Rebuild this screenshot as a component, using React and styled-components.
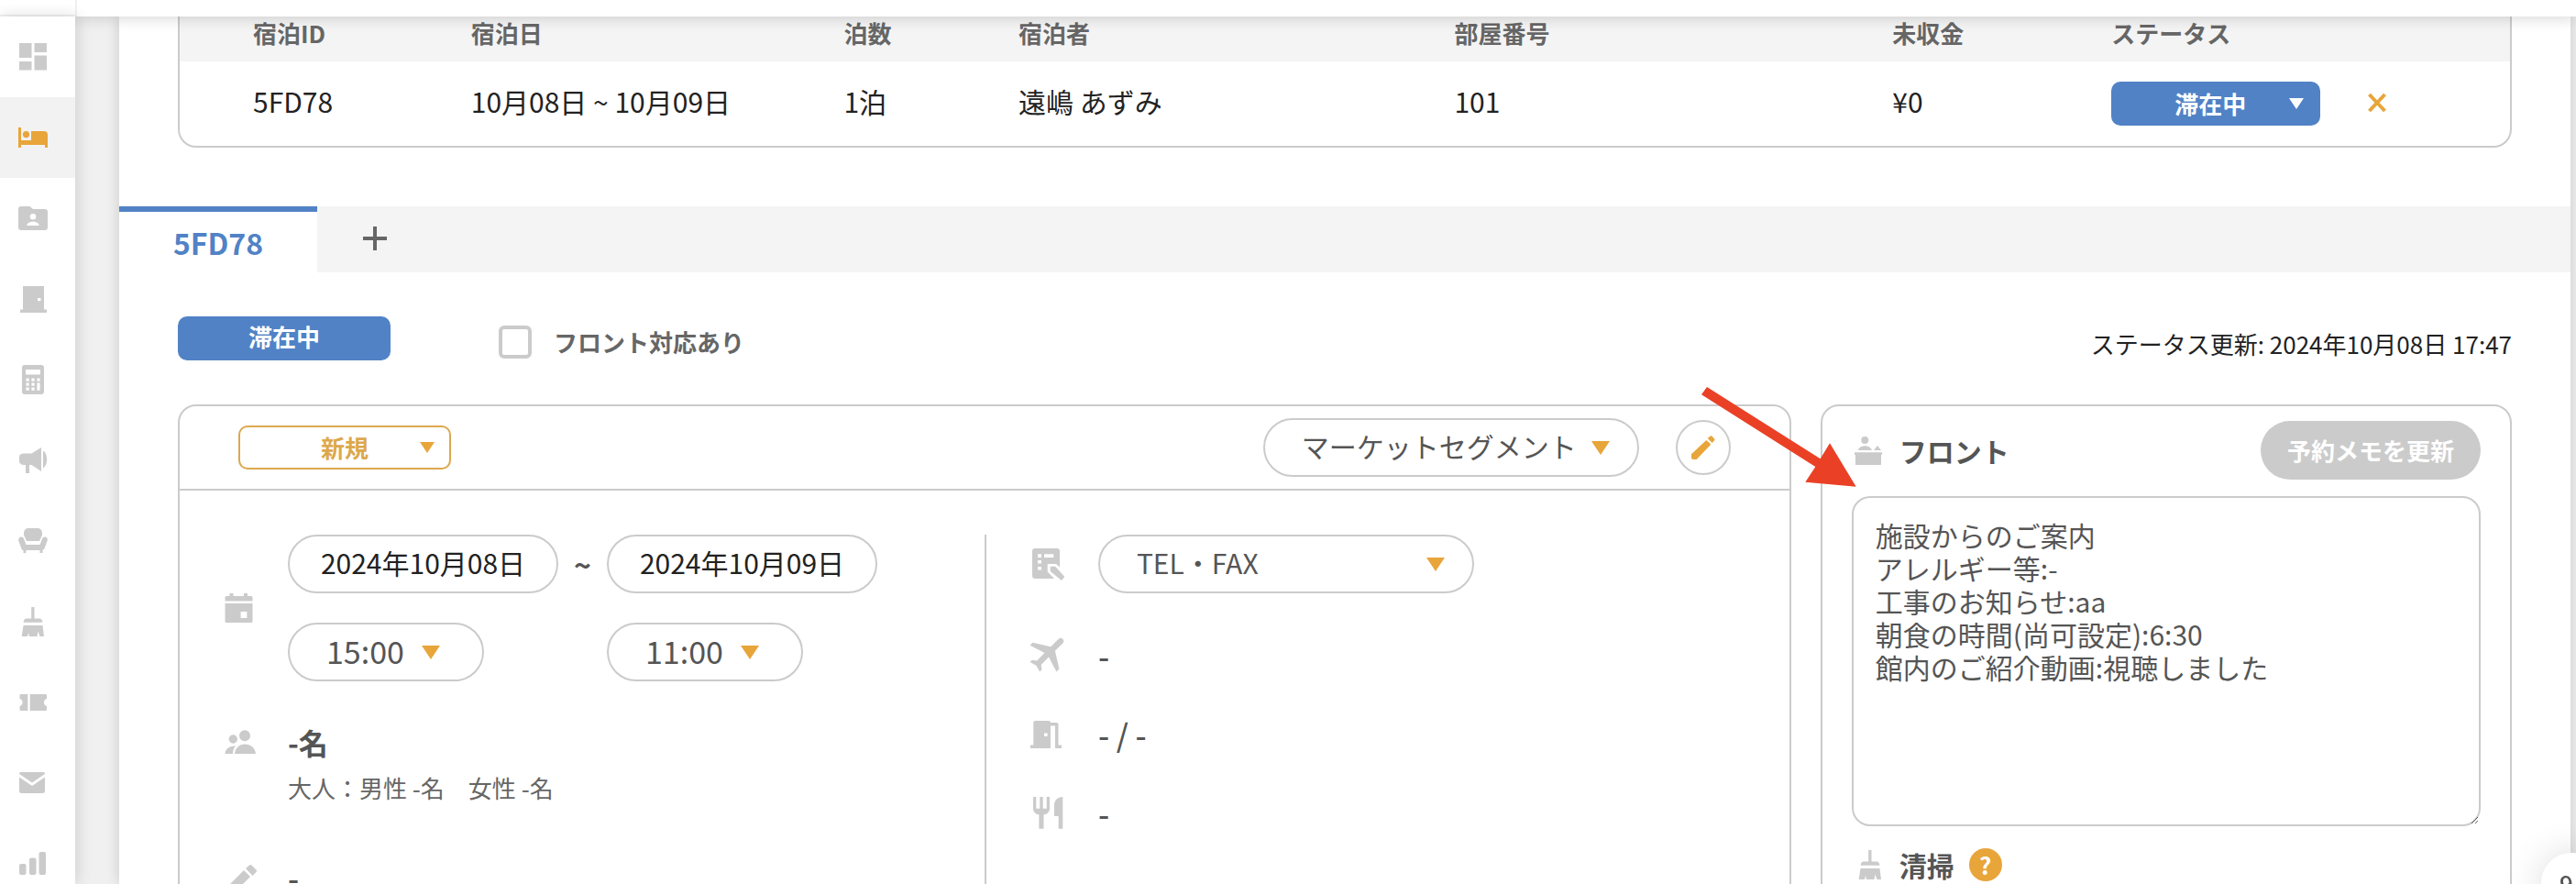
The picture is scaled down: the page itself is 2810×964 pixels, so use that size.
import React, {Component} from 'react';
import styled, {createGlobalStyle, css} from 'styled-components';


const GlobalStyle = createGlobalStyle`
    * {
        box-sizing: border-box;
    }

    html, body {
        margin: 0;
        height: 100%;
        overflow: hidden;
    }

    body, button, input, select, textarea {
        font-family: "Noto Sans CJK JP", "Noto Sans", sans-serif;
    }

    body {
        background: #f0f0f0;
        color: #222;
        font-size: 30px;
        line-height: 44px;
    }
`;

const orange = '#e8a53a';
const blue = '#5182c6';
const line = '#cbcbcb';


const Shell = styled.div`
    display: flex;
    flex-direction: column;
    height: 100vh;
    overflow: hidden;
`;

const TopBar = styled.header`
    position: relative;
    z-index: 2;
    flex: none;
    height: 18px;
    background: #fff;
    box-shadow: 0 2px 16px rgba(0, 0, 0, 0.16);
`;

const Brand = styled.div`
    width: 84px;
    height: 18px;
    border-right: 2px solid #f0f0f0;
    border-bottom: 2px solid #f0f0f0;
`;

const Columns = styled.div`
    display: flex;
    flex: 1;
    min-height: 0;
`;

const SideNav = styled.nav`
    position: relative;
    z-index: 3;
    flex: none;
    width: 82px;
    background: #fff;
    box-shadow: 2px 0 16px rgba(0, 0, 0, 0.14);
`;

const NavLink = styled.a`
    display: flex;
    align-items: center;
    height: 88px;
    padding-left: 16px;
    color: ${({$active}) => ($active ? orange : line)};
    background: ${({$active}) => ($active ? '#f2f2f2' : 'transparent')};
`;

const Icon = styled.svg`
    flex: none;
    width: 40px;
    height: 40px;
    fill: currentColor;
    color: ${({$color}) => $color || 'inherit'};
`;

const Page = styled.main`
    flex: 1;
    min-width: 0;
    margin: 0 6px 0 48px;
    background: #fff;
    box-shadow: 0 0 14px rgba(0, 0, 0, 0.16);
`;

const StayList = styled.section`
    margin: 0 64px 64px;
    border: 2px solid ${line};
    border-top: 0;
    border-radius: 0 0 20px 20px;
    overflow: hidden;
`;

const StayTable = styled.table`
    width: 100%;
    table-layout: fixed;
    border-collapse: collapse;
    text-align: left;

    th, td {
        padding: 0;
        white-space: nowrap;
    }

    th:first-child, td:first-child {
        padding-left: 80px;
    }

    th {
        height: 49px;
        padding-bottom: 14px;
        background: #f4f4f4;
        color: #666;
        font-size: 26px;
        line-height: 34px;
    }

    td {
        height: 92px;
    }

    td:not(:last-child) {
        padding-bottom: 6px;
    }
`;

const Inline = styled.div`
    display: flex;
    align-items: center;
    gap: 42px;
`;

const IconButton = styled.button`
    display: flex;
    align-items: center;
    justify-content: center;
    padding: 0;
    border: 0;
    background: none;
    color: ${orange};
    cursor: pointer;
`;

const RoundButton = styled(IconButton)`
    width: 60px;
    height: 60px;
    border: 2px solid ${line};
    border-radius: 50%;
`;

const badge = css`
    height: 48px;
    border-radius: 10px;
    font-size: 26px;
    font-weight: 700;
    line-height: 44px;
    text-align: center;
    text-align-last: center;
`;

const StatusBadge = styled.div`
    ${badge}
    width: 232px;
    background: ${blue};
    color: #fff;
`;

const SelectBox = styled.div`
    display: inline-grid;
    align-items: center;
    width: ${({$width}) => $width}px;

    > * {
        grid-area: 1 / 1;
    }
`;

const Caret = styled.svg`
    justify-self: end;
    width: ${({$small}) => ($small ? 16 : 20)}px;
    height: ${({$small}) => ($small ? 12 : 15)}px;
    margin-right: ${({$right}) => $right}px;
    fill: ${({$color}) => $color || orange};
    pointer-events: none;
`;

const BadgeSelect = styled.select`
    ${badge}
    appearance: none;
    width: 100%;
    padding: 0 ${({$filled}) => ($filled ? 12 : 0)}px 0 0;
    border: 2px solid ${({$filled}) => ($filled ? blue : '#dca84e')};
    background: ${({$filled}) => ($filled ? blue : '#fff')};
    color: ${({$filled}) => ($filled ? '#fff' : '#dca84e')};
`;

const PillSelect = styled.select`
    appearance: none;
    width: 100%;
    height: 64px;
    padding: 0 40px 4px;
    border: 2px solid ${line};
    border-radius: 32px;
    background: #fff;
    color: #555;
    font-size: ${({$large}) => ($large ? 34 : 30)}px;
`;

const DateInput = styled.input`
    width: 295px;
    height: 64px;
    padding: 0 0 4px;
    border: 2px solid ${line};
    border-radius: 32px;
    background: #fff;
    color: #222;
    font-size: 30px;
    text-align: center;
`;

const TabBar = styled.div`
    display: flex;
    height: 72px;
    background: #f4f4f4;
`;

const Tab = styled.button`
    width: 216px;
    padding: 0;
    border: 0;
    border-top: 6px solid ${blue};
    background: #fff;
    color: ${blue};
    font-size: 32px;
    font-weight: 700;
`;

const AddTab = styled(IconButton)`
    width: 126px;
    padding-bottom: 2px;
    color: #666;
`;

const StatusRow = styled.div`
    display: flex;
    align-items: center;
    height: 48px;
    margin: 48px 64px;
    font-size: 26px;
`;

const CheckLabel = styled.label`
    display: flex;
    align-items: center;
    gap: 24px;
    margin: 8px auto 0 118px;
    color: #666;
    font-weight: 700;
`;

const Checkbox = styled.input`
    appearance: none;
    width: 36px;
    height: 36px;
    margin: 0;
    border: 4px solid ${line};
    border-radius: 6px;
    background: #fff;
`;

const Updated = styled.div`
    padding-top: 12px;
`;

const Cards = styled.div`
    display: grid;
    grid-template-columns: 7fr 3fr;
    gap: 32px;
    margin: 0 64px;
`;

const Card = styled.section`
    position: relative;
    min-width: 0;
    border: 2px solid ${line};
    border-radius: 20px;
`;

const CardHead = styled.div`
    display: flex;
    align-items: center;
    justify-content: space-between;
    height: 92px;
    padding: 0 64px;
    border-bottom: 2px solid ${line};
`;

const HeadActions = styled.div`
    display: flex;
    align-items: center;
    gap: 40px;
`;

const CardBody = styled.div`
    display: grid;
    grid-template-columns: 1fr 1fr;
    padding: 48px 0;
`;

const Details = styled.div`
    display: flex;
    flex-direction: column;
    gap: ${({$divided}) => ($divided ? 42 : 46)}px;
    padding-left: ${({$divided}) => ($divided ? 48 : 44)}px;
    border-left: ${({$divided}) => ($divided ? `2px solid ${line}` : '0')};
    color: #555;
`;

const Detail = styled.div`
    display: flex;
    align-items: ${({$top}) => ($top ? 'flex-start' : 'center')};
    gap: 34px;
    min-height: 44px;
    padding-bottom: ${({$spaced}) => ($spaced ? 4 : 0)}px;
`;

const StayPeriod = styled.div`
    display: grid;
    grid-template-columns: 295px 53px 295px;
    row-gap: 32px;
    align-items: center;
    font-size: 32px;
    font-weight: 700;
    text-align: center;

    > div {
        justify-self: start;
    }
`;

const Guests = styled.div`
    display: flex;
    flex-direction: column;
    gap: 12px;
    padding-bottom: 12px;

    strong {
        font-size: 32px;
        line-height: 40px;
    }

    span {
        color: #666;
        font-size: 26px;
        line-height: 36px;
    }
`;

const Value = styled.span`
    font-size: 34px;
    font-weight: 500;
    line-height: 40px;
`;

const MemoCard = styled(Card)`
    display: flex;
    flex-direction: column;
    padding: 16px 32px 32px;
`;

const MemoTitle = styled.h2`
    display: flex;
    align-items: center;
    gap: 12px;
    margin: 0;
    color: #555;
    font-size: 30px;
    line-height: 40px;
`;

const MemoHead = styled.div`
    display: flex;
    align-items: center;
    justify-content: space-between;
`;

const UpdateButton = styled.button`
    width: 240px;
    height: 64px;
    padding: 0 0 2px;
    border: 0;
    border-radius: 32px;
    background: ${line};
    color: #fff;
    font-size: 26px;
    font-weight: 700;
`;

const Memo = styled.textarea`
    width: 100%;
    height: 360px;
    margin: 18px 0 22px;
    padding: 22px 24px;
    border: 2px solid ${line};
    border-radius: 20px;
    background: #fff;
    color: #555;
    font-size: 30px;
    line-height: 36px;
    resize: both;
`;

const Help = styled.button`
    width: 36px;
    height: 36px;
    margin-left: 4px;
    padding: 0;
    border: 0;
    border-radius: 50%;
    background: ${orange};
    color: #fff;
    font-size: 26px;
    font-weight: 700;
    line-height: 36px;
`;

const Arrow = styled.svg`
    position: absolute;
    top: -21px;
    left: -132px;
    width: 169px;
    height: 109px;
    fill: #ea4126;
    pointer-events: none;
`;

const FloatingButton = styled.button`
    position: fixed;
    right: -30px;
    bottom: -32px;
    z-index: 4;
    width: 68px;
    height: 66px;
    padding: 0 0 0 20px;
    border: 0;
    border-radius: 33px;
    background: #fff;
    box-shadow: 0 0 40px rgba(0, 0, 0, 0.14);
    color: #555;
    font-size: 26px;
    font-weight: 500;
    line-height: 60px;
    text-align: left;
`;


// every drawing sits on a 40 x 40 grid
const shapes = {
    dashboard: <path d="M5 5h13.5v16H5zM21.500 5H35v10H21.500zM21.500 18.500H35v16H21.500zM5 25h13.500v9.500H5z" />,
    bed: <path d="M4 9h3v14h11V13h14a4 4 0 0 1 4 4v14h-3v-3H7v3H4zM12.500 13a3.600 3.600 0 1 1 0 7.200a3.600 3.600 0 1 1 0-7.200z" />,
    folder: <path fillRule="evenodd" d="M7 7h9.500l3.500 3h13a3 3 0 0 1 3 3v17a3 3 0 0 1-3 3H7a3 3 0 0 1-3-3V10a3 3 0 0 1 3-3zM20 15a3.300 3.300 0 1 0 0 6.600a3.300 3.300 0 1 0 0-6.600zM13.200 28h13.600c-.5-3-3.500-4.300-6.800-4.300s-6.300 1.300-6.800 4.300z" />,
    door: <path fillRule="evenodd" d="M9 6h23v25.500h3V35H6v-3.500h3zM25 19v3.300h3.500V19z" />,
    calculator: <path fillRule="evenodd" d="M11 4h18a3 3 0 0 1 3 3v26a3 3 0 0 1-3 3H11a3 3 0 0 1-3-3V7a3 3 0 0 1 3-3zM12 9v5.500h16V9zM12.500 18.500v3.200h3.200v-3.200zM18.400 18.500v3.200h3.200v-3.200zM24.400 18.500v3.200h3.200v-3.200zM12.500 23.500v3.200h3.200v-3.200zM18.400 23.500v3.200h3.200v-3.200zM12.500 28.500v3.200h3.200v-3.200zM18.400 28.500v3.200h3.200v-3.200zM24.400 23.500v8.200h3.200v-8.200z" />,
    megaphone: <path d="M10 12.500h8.500L29 6v26l-10.500-7H16v9h-4v-9h-2c-3 0-5-2-5-4v-5c0-2 2-3.500 5-3.500zM31 9.500c5.500 3 5.500 16 0 19z" />,
    chair: <path d="M15 6h10a5 5 0 0 1 5 5v2.500l-3 6.500H13l-3-6.500V11a5 5 0 0 1 5-5zM5.500 16c2-1 4 0 4.500 1.500l2.500 6.500h15l2.500-6.500c.5-1.500 2.500-2.500 4.500-1.500c1.500 1 1.500 2.500 1 4l-3 8c-.4 1-1 1.500-2 1.500V33h-3v-3h-15v3h-3v-3c-1 0-1.600-.5-2-1.500l-3-8c-.5-1.500-.5-3.500 1-4.500z" />,
    broom: <path d="M18.200 4h3.300v12.500h5.500c2 0 3 1.500 3.500 4.300h-21c.5-2.800 1.500-4.300 3.500-4.300h5.200zM9.500 24h21L32 36h-4.500l-2-5.500L24.500 36h-8.700l-.6-4l-1.400 4H7.700z" />,
    ticket: <path d="M7 11h7.300v18H7c-1 0-1.500-.5-1.500-1.500V24c2-.5 3-2 3-4s-1-3.500-3-4v-3.500C5.500 11.500 6 11 7 11zM16.700 11H33.500c1 0 1.500.5 1.500 1.500V16c-2 .5-3 2-3 4s1 3.500 3 4v3.500c0 1-.5 1.500-1.500 1.500H16.700z" />,
    mail: <path d="M7 8h24c1.500 0 2 .7 2 2L19 19.500L5 10c0-1.300.5-2 2-2zM5 13.500L19 23l14-9.500V28.500a2.500 2.500 0 0 1-2.500 2.500h-23A2.500 2.500 0 0 1 5 28.500z" />,
    chart: <path d="M7 20h3.500a2 2 0 0 1 2 2v8a2 2 0 0 1-2 2H7a2 2 0 0 1-2-2v-8a2 2 0 0 1 2-2zM18 13.500h3.500a2 2 0 0 1 2 2V30a2 2 0 0 1-2 2H18a2 2 0 0 1-2-2V15.500a2 2 0 0 1 2-2zM28.500 7H32a2 2 0 0 1 2 2v21a2 2 0 0 1-2 2h-3.500a2 2 0 0 1-2-2V9a2 2 0 0 1 2-2z" />,
    calendar: <path fillRule="evenodd" d="M10.500 4h4v3h11.500V4h4v3H34a1.500 1.500 0 0 1 1.500 1.500v4h-30v-4A1.500 1.500 0 0 1 7 7h3.500zM5.500 15h30v19.500A1.500 1.500 0 0 1 34 36H7a1.500 1.500 0 0 1-1.500-1.500zM22.600 24v7h6.800v-7z" />,
    people: <path d="M14.300 12.300a4.700 4.700 0 1 1 0 9.400a4.700 4.700 0 1 1 0-9.400zM27 7.300a6 6 0 1 1 0 12a6 6 0 1 1 0-12zM16 33c.5-6 5-10.500 11.200-10.500S38.500 27 39 33zM5.500 33c.3-5 4.500-8.500 11.500-8.500c-2 2-3 5-3 8.500z" />,
    pencil: <path d="M7 27.300L23.300 12l4.400 3.700l.3 1.300L12.700 33H9a2 2 0 0 1-2-2zM24.700 10l3-2.600a1.500 1.500 0 0 1 1.700.1l2.700 3a1.500 1.500 0 0 1 .1 1.700L29.700 15z" />,
    bigPencil: <path d="M5 33L26 12l7 7L12 40H7a2 2 0 0 1-2-2zM28 10l4-3.600a2 2 0 0 1 2.500 0l5 5a2 2 0 0 1 0 2.500L35.500 18z" />,
    form: <path fillRule="evenodd" d="M5 3h24a3 3 0 0 1 3 3v17.500l-4-3.500h-9.300v8.500l7.300 7.500H5a3 3 0 0 1-3-3V6a3 3 0 0 1 3-3zM8 9.300V13h4V9.300zM8 16v3.400h4V16zM8 23v3.400h4V23zM15 9.300V13h10.300V9.300zM21.700 22.700h5.500L37.300 34L34 38L21.700 28z" />,
    plane: <g transform="translate(-5 -8) scale(2.15) rotate(45 12 12)"><path d="M21 16v-2l-8-5V3.500a1.500 1.500 0 0 0-3 0V9l-8 5v2l8-2.500V19l-2 1.500V22l3.500-1 3.500 1v-1.500L13 19v-5.500z" /></g>,
    openDoor: <path fillRule="evenodd" d="M5 5h15a2 2 0 0 1 2 2h6.500a2 2 0 0 1 2 2v22.500H34V35h-7V10.500h-5V35H0v-3.500h3.300V7A2 2 0 0 1 5 5zM15 18.500V22h3.600v-3.500z" />,
    cutlery: <path d="M3 2h3.300v12.700h4V2h3.400v12.700h4V2H21v12.500c0 4-2.500 6.500-6.500 6.800v15.400H9.400V21.300C5.500 21 3 18.500 3 14.500zM35.300 2v34.700h-4.600V23H26V11c0-5.500 4-9 9.300-9z" />,
    reception: <path d="M14.300 5a4 4 0 1 1 0 8a4 4 0 1 1 0-8zM6.700 20c1-3 4-4.700 7.700-4.700s6.600 1.700 7.600 4.700zM24 20l4-5l4 5zM3 22.300h30V25h-1v11H4V25H3z" />,
    plus: <path d="M18 7h4v11h11v4H22v11h-4V22H7v-4h11z" />,
    cross: <path d="M11.500 10L28.500 28M28.500 10L11.500 28" stroke="currentColor" strokeWidth="4" />,
};

function Glyph({name, color}) {
    return (
        <Icon viewBox="0 0 40 40" $color={color} aria-hidden="true">{shapes[name]}</Icon>
    );
}

function Select({label, options, width, pill, large, filled, right}) {
    const Field = pill ? PillSelect : BadgeSelect;
    return (
        <SelectBox $width={width}>
            <Field aria-label={label} $large={large} $filled={filled}>
                {options.map(option => <option key={option}>{option}</option>)}
            </Field>
            <Caret viewBox="0 0 20 15" preserveAspectRatio="none" $small={!pill} $right={right} $color={filled && '#fff'}>
                <path d="M0 0h20L10 15z" />
            </Caret>
        </SelectBox>
    );
}


const navigation = [
    ['dashboard', 'ダッシュボード'],
    ['bed', '宿泊'],
    ['folder', '顧客'],
    ['door', '部屋'],
    ['calculator', '会計'],
    ['megaphone', 'お知らせ'],
    ['chair', '設備'],
    ['broom', '清掃'],
    ['ticket', 'クーポン'],
    ['mail', 'メール'],
    ['chart', '集計'],
];

const columns = [
    ['宿泊ID', '12.5%'],
    ['宿泊日', '16%'],
    ['泊数', '7.5%'],
    ['宿泊者', '18.7%'],
    ['部屋番号', '18.8%'],
    ['未収金', '9.4%'],
    ['ステータス', 'auto'],
];

const firstMemo = `施設からのご案内
アレルギー等:-
工事のお知らせ:aa
朝食の時間(尚可設定):6:30
館内のご紹介動画:視聴しました`;


class App extends Component {
    constructor(props) {
        super(props);
        this.state = {
            memo: firstMemo,
            frontDesk: false,
            checkIn: '2024年10月08日',
            checkOut: '2024年10月09日',
        }
    }

    setField = (name, value) => {
        this.setState({[name]: value})
    }

    render() {
        const {memo, frontDesk, checkIn, checkOut} = this.state;

        return (
            <Shell>
                <GlobalStyle />
                <TopBar><Brand /></TopBar>
                <Columns>
                    <SideNav>
                        {navigation.map(([name, label]) => (
                            <NavLink key={name} href={`#${name}`} aria-label={label} $active={name === 'bed'}>
                                <Glyph name={name} />
                            </NavLink>
                        ))}
                    </SideNav>

                    <Page>
                        <StayList>
                            <StayTable>
                                <colgroup>
                                    {columns.map(([title, width]) => <col key={title} width={width} />)}
                                </colgroup>
                                <thead>
                                    <tr>
                                        {columns.map(([title]) => <th key={title}>{title}</th>)}
                                    </tr>
                                </thead>
                                <tbody>
                                    <tr>
                                        <td>5FD78</td>
                                        <td>10月08日 ~ 10月09日</td>
                                        <td>1泊</td>
                                        <td>遠嶋 あずみ</td>
                                        <td>101</td>
                                        <td>¥0</td>
                                        <td>
                                            <Inline>
                                                <Select label="ステータス" options={['滞在中']} width={228} right={18} filled />
                                                <IconButton type="button" aria-label="取り消し">
                                                    <Glyph name="cross" />
                                                </IconButton>
                                            </Inline>
                                        </td>
                                    </tr>
                                </tbody>
                            </StayTable>
                        </StayList>

                        <TabBar>
                            <Tab type="button">5FD78</Tab>
                            <AddTab type="button" aria-label="追加"><Glyph name="plus" /></AddTab>
                        </TabBar>

                        <StatusRow>
                            <StatusBadge>滞在中</StatusBadge>
                            <CheckLabel>
                                <Checkbox
                                    type="checkbox"
                                    checked={frontDesk}
                                    onChange={e => {this.setField('frontDesk', e.target.checked)}} />
                                フロント対応あり
                            </CheckLabel>
                            <Updated>ステータス更新: 2024年10月08日 17:47</Updated>
                        </StatusRow>

                        <Cards>
                            <Card>
                                <CardHead>
                                    <Select label="種別" options={['新規']} width={232} right={18} />
                                    <HeadActions>
                                        <Select label="マーケットセグメント" options={['マーケットセグメント']} width={410} right={32} pill />
                                        <RoundButton type="button" aria-label="編集"><Glyph name="pencil" /></RoundButton>
                                    </HeadActions>
                                </CardHead>
                                <CardBody>
                                    <Details>
                                        <Detail>
                                            <Glyph name="calendar" color={line} />
                                            <StayPeriod>
                                                <DateInput
                                                    aria-label="チェックイン日"
                                                    value={checkIn}
                                                    onChange={e => {this.setField('checkIn', e.target.value)}} />
                                                <span>~</span>
                                                <DateInput
                                                    aria-label="チェックアウト日"
                                                    value={checkOut}
                                                    onChange={e => {this.setField('checkOut', e.target.value)}} />
                                                <Select label="チェックイン時刻" options={['15:00']} width={214} right={48} pill large />
                                                <span />
                                                <Select label="チェックアウト時刻" options={['11:00']} width={214} right={48} pill large />
                                            </StayPeriod>
                                        </Detail>
                                        <Detail $top>
                                            <Glyph name="people" color={line} />
                                            <Guests>
                                                <strong>-名</strong>
                                                <span>大人：男性 -名　女性 -名</span>
                                            </Guests>
                                        </Detail>
                                        <Detail>
                                            <Glyph name="bigPencil" color={line} />
                                            <Value>-</Value>
                                        </Detail>
                                    </Details>
                                    <Details $divided>
                                        <Detail $spaced>
                                            <Glyph name="form" color={line} />
                                            <Select label="予約経路" options={['TEL・FAX']} width={410} right={32} pill />
                                        </Detail>
                                        <Detail>
                                            <Glyph name="plane" color={line} />
                                            <Value>-</Value>
                                        </Detail>
                                        <Detail>
                                            <Glyph name="openDoor" color={line} />
                                            <Value>- / -</Value>
                                        </Detail>
                                        <Detail>
                                            <Glyph name="cutlery" color={line} />
                                            <Value>-</Value>
                                        </Detail>
                                    </Details>
                                </CardBody>
                            </Card>

                            <MemoCard>
                                <MemoHead>
                                    <MemoTitle><Glyph name="reception" color={line} />フロント</MemoTitle>
                                    <UpdateButton type="button">予約メモを更新</UpdateButton>
                                </MemoHead>
                                <Memo
                                    aria-label="フロント"
                                    value={memo}
                                    spellCheck={false}
                                    onChange={e => {this.setField('memo', e.target.value)}} />
                                <MemoTitle>
                                    <Glyph name="broom" color={line} />
                                    清掃
                                    <Help type="button" aria-label="ヘルプ">?</Help>
                                </MemoTitle>
                                <Arrow viewBox="0 0 169 109" aria-hidden="true">
                                    <path d="M6 0L0 8.300L124.300 87L113.300 103.700L168.700 108.700L140 61.300L129.700 78.300z" />
                                </Arrow>
                            </MemoCard>
                        </Cards>
                    </Page>
                </Columns>
                <FloatingButton type="button">9</FloatingButton>
            </Shell>
        )
    }
}

export default App;
